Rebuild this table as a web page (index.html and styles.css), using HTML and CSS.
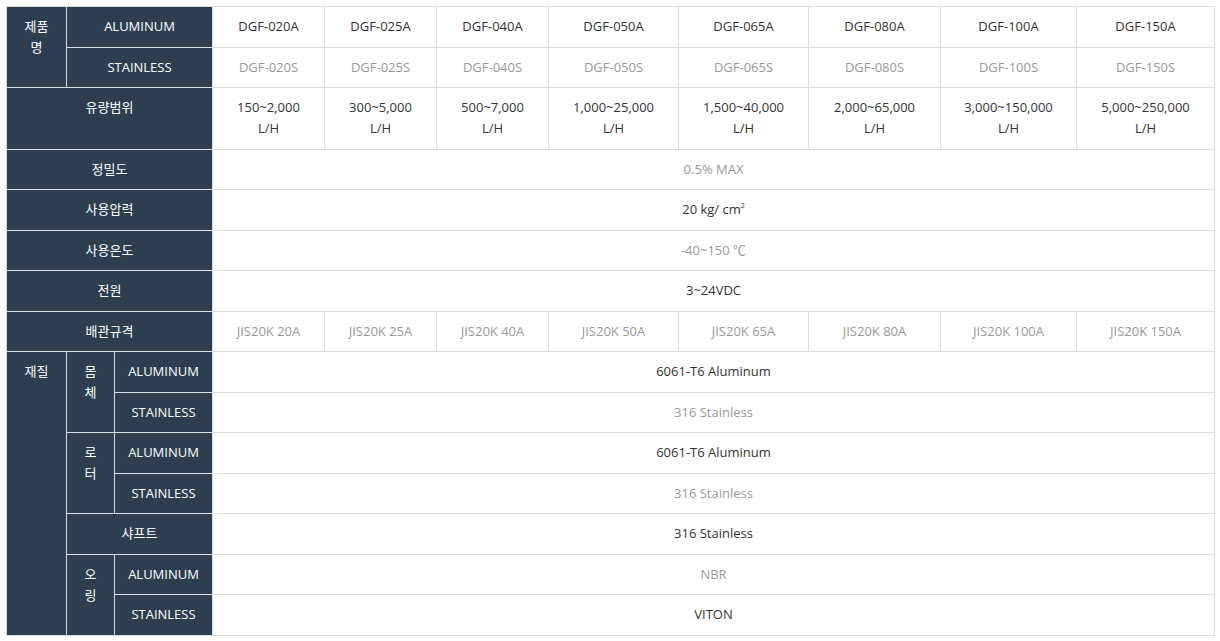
FILE: index.html
```html
<!DOCTYPE html>
<html lang="ko">
<head>
<meta charset="utf-8">
<title>DGF Spec</title>
<link rel="stylesheet" href="styles.css">
</head>
<body>
<table class="spec">
  <colgroup>
    <col class="c-a"><col class="c-b"><col class="c-c">
    <col class="d1"><col class="d1"><col class="d1"><col class="d2"><col class="d2"><col class="d3"><col class="d4"><col class="d5">
  </colgroup>
  <tbody>
    <tr class="dark">
      <th rowspan="2">제품명</th>
      <th colspan="2" class="nw">ALUMINUM</th>
      <td>DGF-020A</td><td>DGF-025A</td><td>DGF-040A</td><td>DGF-050A</td><td>DGF-065A</td><td>DGF-080A</td><td>DGF-100A</td><td>DGF-150A</td>
    </tr>
    <tr class="gray">
      <th colspan="2" class="nw">STAINLESS</th>
      <td>DGF-020S</td><td>DGF-025S</td><td>DGF-040S</td><td>DGF-050S</td><td>DGF-065S</td><td>DGF-080S</td><td>DGF-100S</td><td>DGF-150S</td>
    </tr>
    <tr class="dark">
      <th colspan="3">유량범위</th>
      <td>150~2,000<br>L/H</td><td>300~5,000<br>L/H</td><td>500~7,000<br>L/H</td><td>1,000~25,000<br>L/H</td><td>1,500~40,000<br>L/H</td><td>2,000~65,000<br>L/H</td><td>3,000~150,000<br>L/H</td><td>5,000~250,000<br>L/H</td>
    </tr>
    <tr class="gray"><th colspan="3">정밀도</th><td colspan="8">0.5% MAX</td></tr>
    <tr class="dark"><th colspan="3">사용압력</th><td colspan="8">20 kg/ cm<sup>2</sup></td></tr>
    <tr class="gray"><th colspan="3">사용온도</th><td colspan="8">-40~150 ℃</td></tr>
    <tr class="dark"><th colspan="3">전원</th><td colspan="8">3~24VDC</td></tr>
    <tr class="gray">
      <th colspan="3">배관규격</th>
      <td>JIS20K 20A</td><td>JIS20K 25A</td><td>JIS20K 40A</td><td>JIS20K 50A</td><td>JIS20K 65A</td><td>JIS20K 80A</td><td>JIS20K 100A</td><td>JIS20K 150A</td>
    </tr>
    <tr class="dark">
      <th rowspan="7">재질</th>
      <th rowspan="2">몸체</th>
      <th class="nw">ALUMINUM</th>
      <td colspan="8">6061-T6 Aluminum</td>
    </tr>
    <tr class="gray"><th class="nw">STAINLESS</th><td colspan="8">316 Stainless</td></tr>
    <tr class="dark">
      <th rowspan="2">로터</th>
      <th class="nw">ALUMINUM</th>
      <td colspan="8">6061-T6 Aluminum</td>
    </tr>
    <tr class="gray"><th class="nw">STAINLESS</th><td colspan="8">316 Stainless</td></tr>
    <tr class="dark"><th colspan="2">샤프트</th><td colspan="8">316 Stainless</td></tr>
    <tr class="gray">
      <th rowspan="2">오링</th>
      <th class="nw">ALUMINUM</th>
      <td colspan="8">NBR</td>
    </tr>
    <tr class="dark"><th class="nw">STAINLESS</th><td colspan="8">VITON</td></tr>
  </tbody>
</table>
</body>
</html>
```

FILE: styles.css
```css
html, body {
  margin: 0;
  padding: 0;
  background: #ffffff;
}
body {
  padding: 6px;
  font-family: "Open Sans", "Noto Sans CJK KR", sans-serif;
  font-size: 13px;
}
.spec {
  width: 1208px;
  table-layout: fixed;
  border-collapse: collapse;
}
.c-a { width: 60px; }
.c-b { width: 48px; }
.c-c { width: 98px; }
.d1 { width: 112px; }
.d2 { width: 130px; }
.d3 { width: 132px; }
.d4 { width: 136px; }
.d5 { width: 138px; }
.spec th,
.spec td {
  padding: 9.25px 12px;
  line-height: 21px;
  text-align: center;
  vertical-align: top;
}
.spec th {
  background: #2c3e50;
  color: #ffffff;
  font-weight: normal;
  border: 1px solid #d6dde4;
}
.spec td {
  border: 1px solid #dddddd;
  padding-left: 4px;
  padding-right: 4px;
}
.spec th.nw {
  white-space: nowrap;
  padding-left: 4px;
  padding-right: 4px;
}
.dark td { color: #333333; }
.gray td { color: #999999; }
.spec sup {
  font-size: 7px;
  line-height: 0;
  vertical-align: 6px;
}
```
